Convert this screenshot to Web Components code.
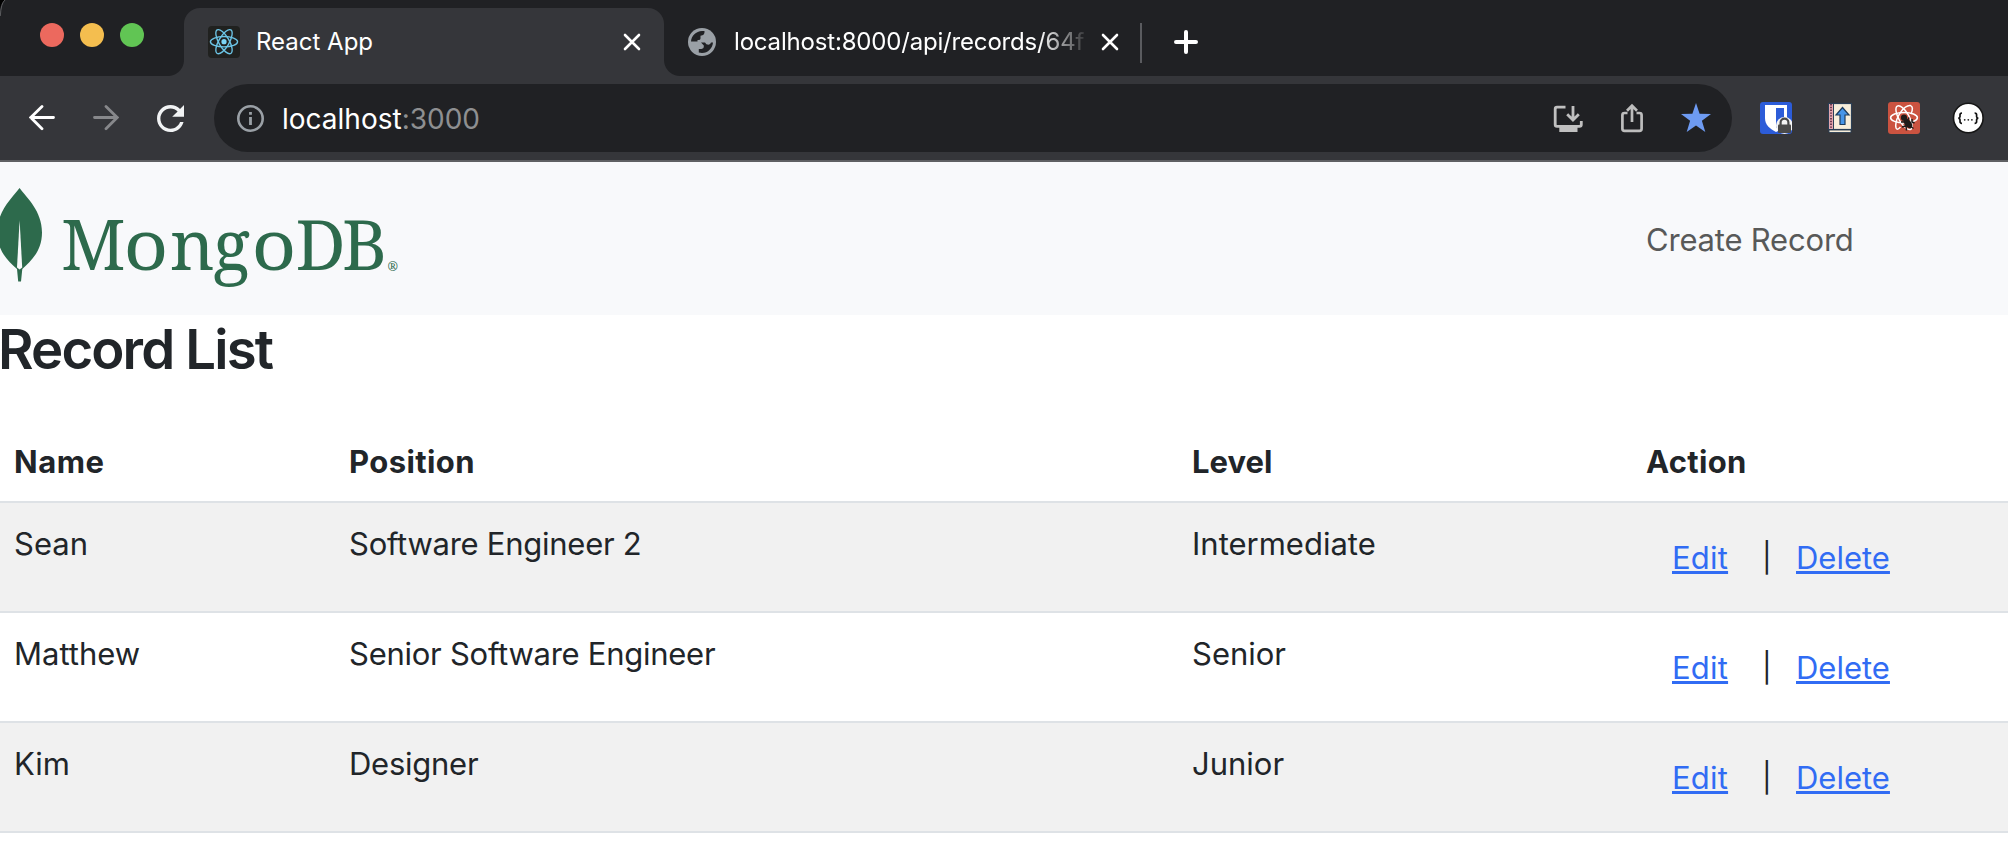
<!DOCTYPE html>
<html lang="en">
<head>
<meta charset="utf-8">
<title>React App</title>
<style>
html,body{margin:0;padding:0;background:#fff}
body{width:2008px;height:854px;overflow:hidden;font-family:Inter,"Liberation Sans",sans-serif;color:#212529}
</style>
</head>
<body>
<browser-window>
  <tab-strip slot="tabs">
    <browser-tab active><react-icon slot="icon"></react-icon>React App</browser-tab>
    <browser-tab><globe-icon slot="icon"></globe-icon><span style="letter-spacing:-.18px">localhost:8000/api/records/64f</span></browser-tab>
  </tab-strip>
  <address-bar slot="toolbar" host="localhost" port=":3000"></address-bar>
  <site-nav><a>Create Record</a></site-nav>
  <record-list heading="Record List">
    <record-row name="Sean" position="Software Engineer 2" level="Intermediate" striped></record-row>
    <record-row name="Matthew" position="Senior Software Engineer" level="Senior"></record-row>
    <record-row name="Kim" position="Designer" level="Junior" striped></record-row>
  </record-list>
</browser-window>

<script>
const define = (name, html) => customElements.define(name, class extends HTMLElement {
  connectedCallback() {
    if (this.shadowRoot) return;
    const root = this.attachShadow({ mode: 'open' });
    root.innerHTML = typeof html === 'function' ? html(this) : html;
  }
});

define('browser-window', `
<style>
:host{display:flex;flex-direction:column;width:2008px;height:854px;position:relative;background:#fff}
.chrome{background:#35363a;border-bottom:2px solid #5f6063}
.corner{position:absolute;left:0;top:0;width:20px;height:20px}
</style>
<div class="chrome"><slot name="tabs"></slot><slot name="toolbar"></slot></div>
<slot></slot>
<svg class="corner" viewBox="0 0 20 20"><path d="M0 0H5Q1 3 0 9Z" fill="#000"/><path d="M5 0Q1 3 .3 16" fill="none" stroke="#5b5c5f" stroke-width="1"/></svg>`);

define('tab-strip', `
<style>
:host{display:flex;align-items:stretch;height:76px;background:#202124;box-sizing:border-box;padding-top:8px}
.lights{display:flex;gap:16px;width:144px;padding:15px 0 0 40px}
.lights i{width:24px;height:24px;border-radius:50%}
.sep{width:2px;height:40px;margin:15px 0 0 2px;background:#5a5b5f}
.plus{margin:20px 0 0 30px;width:28px;height:28px}
</style>
<div class="lights"><i style="background:#ec695e"></i><i style="background:#f4be4f"></i><i style="background:#61c554"></i></div>
<slot></slot>
<div class="sep"></div>
<svg class="plus" viewBox="0 0 28 28"><path d="M14 4V24M4 14H24" stroke="#fff" stroke-width="4" stroke-linecap="round"/></svg>`);

define('browser-tab', el => {
  const on = el.hasAttribute('active');
  return `
<style>
:host{display:flex;position:relative;box-sizing:border-box;height:68px;width:${on ? 480 : 474}px;padding-left:24px;align-items:flex-start;
${on ? 'background:#35363a;border-radius:16px 16px 0 0;' : ''}color:#fff;font-size:24px;line-height:32px}
.flare{position:absolute;bottom:0;width:16px;height:16px}
.l{left:-16px;background:radial-gradient(circle at 0 0,#202124 15.5px,#35363a 16.5px)}
.r{right:-16px;background:radial-gradient(circle at 100% 0,#202124 15.5px,#35363a 16.5px)}
.icon{display:flex;width:${on ? 32 : 28}px;margin-top:${on ? 18 : 20}px}
.title{white-space:nowrap;overflow:hidden;margin:18px 0 0 ${on ? 16 : 18}px;width:${on ? 340 : 351}px;${on ? '' : '-webkit-mask-image:linear-gradient(90deg,#000 305px,rgba(0,0,0,.1) 351px);mask-image:linear-gradient(90deg,#000 305px,rgba(0,0,0,.1) 351px);'}}
.x{margin:24px 0 0 ${on ? 26 : 15}px;width:20px;height:20px}
</style>
${on ? '<i class="flare l"></i><i class="flare r"></i>' : ''}
<div class="icon"><slot name="icon"></slot></div>
<div class="title"><slot></slot></div>
<svg class="x" viewBox="0 0 20 20"><path d="M3 3L17 17M17 3L3 17" stroke="#fff" stroke-width="2.6" stroke-linecap="round"/></svg>`;
});

define('react-icon', `
<style>:host{display:block;width:32px;height:32px}svg{display:block}</style>
<svg width="32" height="32" viewBox="0 0 32 32"><rect width="32" height="32" rx="4" fill="#20211f"/>
<circle cx="16" cy="15.7" r="2.6" fill="#7cd5f6"/>
<g fill="none" stroke="#6cc5e6" stroke-width="1.35"><ellipse cx="16" cy="15.7" rx="13.6" ry="5.2"/><ellipse cx="16" cy="15.7" rx="13.6" ry="5.2" transform="rotate(60 16 15.7)"/><ellipse cx="16" cy="15.7" rx="13.6" ry="5.2" transform="rotate(120 16 15.7)"/></g></svg>`);

define('globe-icon', `
<style>:host{display:block;width:28px;height:28px}svg{display:block}</style>
<svg width="28" height="28" viewBox="0 0 28 28"><circle cx="14" cy="14" r="14" fill="#9aa0a6"/>
<path d="M3 13.600C3.300 8 8 3.200 14 3H16.500C16.800 6 15.500 7.500 12.500 7.800V10.500Q12.500 12 10.500 12H9.500V13.600ZM25 14.500C24.600 20 20 25 14 25L10.800 24.500V21H13.500Q16.200 20.500 15.800 17.500L13 14.600H17Q18 16.800 20.500 16.800Q22.500 16.500 23 14.500Z" fill="#202124"/></svg>`);

define('address-bar', el => `
<style>
:host{display:flex;height:84px;box-sizing:border-box;padding-top:8px}
svg{display:block;flex:none}
.nav{display:flex;width:185px;padding:21px 0 0 29px;gap:38px}
.omni{display:flex;box-sizing:border-box;width:1518px;height:68px;border-radius:34px;background:#202124;padding:21px 21px 0 23px}
.url{font-size:28px;line-height:34px;margin:-3px 0 0 18px;flex:1;color:#fff;white-space:nowrap}
.url span{color:#8e8f91}
.ext{display:flex;gap:32px;padding:18px 0 0 28px}
</style>
<div class="nav">
<svg width="26" height="27" viewBox="0 0 26 27"><path d="M24.5 12.5H1.8M13 1.5L1.8 12.5L13 23.8" fill="none" stroke="#fff" stroke-width="2.8" stroke-linecap="round"/></svg>
<svg width="26" height="27" viewBox="0 0 26 27"><path d="M1.5 12.5H24.2M13 1.5L24.2 12.5L13 23.8" fill="none" stroke="#87888b" stroke-width="2.8" stroke-linecap="round"/></svg>
<svg width="27" height="27" viewBox="4 4 16 16"><path d="M17.65 6.35C16.2 4.9 14.21 4 12 4c-4.42 0-7.99 3.58-7.99 8s3.57 8 7.99 8c3.73 0 6.84-2.55 7.73-6h-2.08c-.82 2.33-3.04 4-5.65 4-3.31 0-6-2.69-6-6s2.69-6 6-6c1.66 0 3.14.69 4.22 1.78L13 11h7V4l-2.35 2.35z" fill="#f1f3f4"/></svg>
</div>
<div class="omni">
<svg width="27" height="27" viewBox="0 0 27 27"><circle cx="13.5" cy="13.5" r="12.2" fill="none" stroke="#9aa0a6" stroke-width="2.6"/><path d="M12.1 7H14.9V9.8H12.1ZM12.1 12H14.9V20H12.1Z" fill="#9aa0a6"/></svg>
<div class="url">${el.getAttribute('host')}<span>${el.getAttribute('port')}</span></div>
<svg width="30" height="30" viewBox="0 0 30 30" style="margin-right:37px"><path d="M12.5 2.2H4Q2.2 2.2 2.2 4V19.5Q2.2 21.3 4 21.3H26.5Q28.3 21.3 28.3 19.5V16M20 1V14.5M14.2 9.2L20 15L25.8 9.2" fill="none" stroke="#c0c0c0" stroke-width="2.8"/><path d="M6.3 22H24.5V27H6.3Z" fill="#c0c0c0"/></svg>
<svg width="24" height="31" viewBox="0 0 24 31" style="margin:-2px 37px 0 0"><path d="M7.5 10H4.5Q2.4 10 2.4 12.1V25.8Q2.4 27.9 4.5 27.9H19.5Q21.6 27.9 21.6 25.8V12.1Q21.6 10 19.5 10H16.5M12 19V3M7 7.7L12 2.7L17 7.7" fill="none" stroke="#bdbdbd" stroke-width="2.7"/></svg>
<svg width="30" height="30" viewBox="0 0 30 30" style="margin-top:-2px"><path d="M15 0L18.6 10.7L30 10.9L20.9 17.8L24.3 29L15 22.4L5.7 29L9.1 17.8L0 10.9L11.4 10.7Z" fill="#6e9bf2"/></svg>
</div>
<div class="ext">
<svg width="32" height="32" viewBox="0 0 32 32"><rect width="32" height="32" rx="3" fill="#2c5cd8"/><path d="M5 3H27V16C27 23 22 27 16 30C10 27 5 23 5 16Z" fill="#fff"/><path d="M16 6H24V15.5C24 20 20 23.5 16 26Z" fill="#2c5cd8"/><circle cx="24.500" cy="23.500" r="8.500" fill="#f4f4f4"/><rect x="18" y="22.5" width="13" height="8.5" rx="1" fill="#4a4a4a"/><path d="M20.6 23V20.5A3.9 3.9 0 0 1 28.4 20.5V23" fill="none" stroke="#4a4a4a" stroke-width="2.2"/></svg>
<svg width="32" height="32" viewBox="0 0 32 32"><rect x="4.5" y="1.5" width="23" height="26" fill="#f8eedb" stroke="#2b3f56" stroke-width="1.2"/><path d="M5 2H9V27H5Z" fill="#e3a6ae"/><path d="M7 2V27" stroke="#713b51" stroke-width="2" stroke-dasharray="1.4 1.4"/><path d="M9.5 2V27" stroke="#2b3f56" stroke-width="1"/><path d="M5 28H27V30.5H5Z" fill="#f8eedb" stroke="#2b3f56" stroke-width=".9"/><path d="M18.5 5.5L25 13H21V22.5H16V13H12Z" fill="#4795e8" stroke="#1e3c5c" stroke-width="1.2"/></svg>
<svg width="32" height="32" viewBox="0 0 32 32"><rect width="32" height="32" rx="3" fill="#cb5340"/><g fill="none" stroke="#fff" stroke-width="1.5"><ellipse cx="16" cy="15.7" rx="13.4" ry="5.2"/><ellipse cx="16" cy="15.7" rx="13.4" ry="5.2" transform="rotate(60 16 15.7)"/><path d="M12.5 25Q8 30 7.7 23.5C7.9 15 16 3 22.500 3.600Q26 5 23 12"/></g><circle cx="16" cy="15.7" r="3.1" fill="#201b19"/><ellipse cx="20" cy="21.5" rx="3.3" ry="5.5" transform="rotate(-40 20 21.5)" fill="#201b19"/><path d="M13 20L19 20L21 15.5M14 25L19 23.5M24 17V20L26.5 21M18 24L18.5 28.5M22 24L25.5 26.5" fill="none" stroke="#201b19" stroke-width="1.5"/></svg>
<svg width="32" height="32" viewBox="0 0 32 32"><circle cx="16.3" cy="16" r="14.800" fill="#fff" stroke="#151515" stroke-width="1.6"/><path d="M10 11Q7.8 11 8 13.3Q8.3 16 6.3 16.2Q8.3 16.4 8 19Q7.8 21.4 10 21.4M22.6 11Q24.8 11 24.6 13.3Q24.3 16 26.3 16.2Q24.3 16.4 24.6 19Q24.8 21.4 22.6 21.4" fill="none" stroke="#111" stroke-width="1.7"/><g fill="#222"><circle cx="12.7" cy="17.8" r=".9"/><circle cx="16.3" cy="17.8" r=".9"/><circle cx="19.9" cy="17.8" r=".9"/></g></svg>
</div>`);

define('site-nav', `
<style>
:host{display:flex;height:153px;background:#f8f9fb;box-sizing:border-box}
.brand{width:1646px}
.brand svg{display:block}
.link{font-size:31px;line-height:48px;letter-spacing:-.2px;color:#585959;margin-top:54px}
</style>
<div class="brand"><svg width="420" height="153" viewBox="0 162 420 153" fill="#2d6a4c">
<path d="M19.6 188C27 198 42 211 42 232.500C42 251 31 261 22.300 269L21 281.500H18.200L17 269C8 261 -2.800 251 -2.800 232.500C-2.800 211 12 198 19.600 188Z"/>
<path d="M19.600 220L22.200 267.500L19.600 269.500L17 267.500Z" fill="#f8f9fb"/>
<text font-family="Noto Serif, serif" font-size="69" y="269.700"><tspan x="61">M</tspan><tspan x="123.500" textLength="45" lengthAdjust="spacingAndGlyphs">o</tspan><tspan x="170">n</tspan><tspan x="213">g</tspan><tspan x="251.500" textLength="45" lengthAdjust="spacingAndGlyphs">o</tspan><tspan x="295.500">D</tspan><tspan x="342">B</tspan></text>
<text font-family="Noto Serif, serif" font-size="12.500" x="387.500" y="270.500">®</text>
</svg></div>
<div class="link"><slot></slot></div>`);

define('record-list', el => `
<style>
:host{display:block}
h3{margin:0;height:106px;font-weight:600;font-size:54.500px;line-height:67px;letter-spacing:-1.850px;box-sizing:border-box;padding-top:1px;text-indent:-2px}
.head{display:grid;grid-template-columns:335px 843px 454px 1fr;height:80px;padding-left:14px;box-sizing:border-box;padding-top:17px;font:700 31px/48px Inter,sans-serif}
</style>
<h3>${el.getAttribute('heading')}</h3>
<div class="head"><span style="letter-spacing:.5px">Name</span><span style="letter-spacing:.4px">Position</span><span style="letter-spacing:0">Level</span><span style="letter-spacing:.3px">Action</span></div>
<slot></slot>`);

define('record-row', el => `
<style>
:host{display:grid;grid-template-columns:335px 843px 454px 1fr;height:110px;box-sizing:border-box;border-top:2px solid #dee2e6;padding:17px 0 0 14px;font-size:31px;line-height:48px;background:${el.hasAttribute('striped') ? '#f1f1f1' : '#fff'}}
:host(:last-child){height:112px;border-bottom:2px solid #dee2e6}
.pos{letter-spacing:-.26px}
.act{display:flex;padding:14px 0 0 26px;height:48px}
a{color:#316cf4;text-decoration:underline;text-decoration-thickness:3px;text-underline-offset:2px;text-decoration-skip-ink:none}
a:first-child{width:56px;letter-spacing:.2px}
.bar{width:68px;text-indent:34px;font-size:29px}
</style>
<span>${el.getAttribute('name')}</span><span class="pos">${el.getAttribute('position')}</span><span>${el.getAttribute('level')}</span>
<span class="act"><a>Edit</a><span class="bar">|</span><a>Delete</a></span>`);
</script>
</body>
</html>
